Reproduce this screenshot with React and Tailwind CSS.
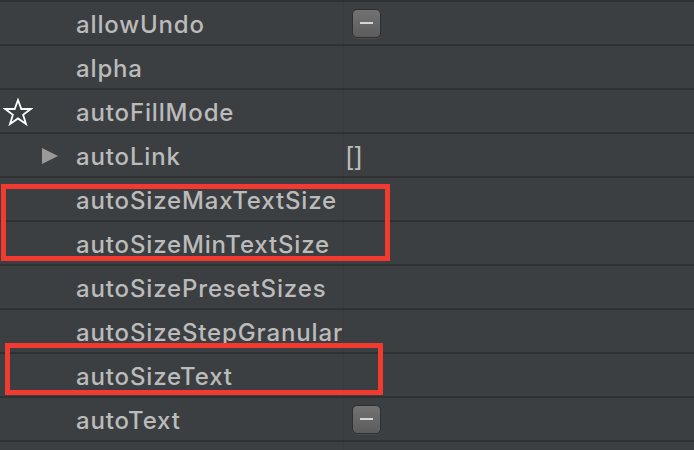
import React from "react";

const rows = [
  { name: "allowUndo", value: "minus" },
  { name: "alpha" },
  { name: "autoFillMode", icon: "star" },
  { name: "autoLink", icon: "tri", value: "brackets" },
  { name: "autoSizeMaxTextSize" },
  { name: "autoSizeMinTextSize" },
  { name: "autoSizePresetSizes" },
  { name: "autoSizeStepGranularity" },
  { name: "autoSizeText" },
  { name: "autoText", value: "minus" },
  { name: "" },
];

function Star() {
  return (
    <svg width="30" height="28" viewBox="0 0 30 28" className="ml-[3px] mt-[2px]">
      <polygon
        points="15,2 18.3,11 27.8,11 20.1,16.8 23,26 15,20.4 7,26 9.9,16.8 2.2,11 11.7,11"
        fill="none"
        stroke="#ffffff"
        strokeWidth="1.8"
        strokeLinejoin="miter"
      />
    </svg>
  );
}

function Tri() {
  return (
    <svg width="16" height="16" viewBox="0 0 16 16" className="ml-[42px] mt-[2px]">
      <polygon points="0,0 16,8 0,16" fill="#9a9a9a" />
    </svg>
  );
}

function MinusBox() {
  return (
    <div className="ml-[8px] w-[29px] h-[29px] rounded-[5px] border border-[#2e2f30] bg-gradient-to-b from-[#727272] to-[#5c5c5c] shadow-[0_1px_0_#4a4c4e] flex items-center justify-center">
      <div className="w-[13px] h-[2px] bg-[#d6d6d6]" />
    </div>
  );
}

export default function App() {
  return (
    <div
      className="relative w-[694px] h-[450px] bg-[#3c3f41] overflow-hidden border-t-2 border-[#2e3032]"
      style={{ fontFamily: "Inter, 'Noto Sans', sans-serif" }}
    >
      {rows.map((r, i) => (
        <div key={i} className="flex h-[44px] border-b-2 border-[#2e3032]">
          <div className="w-[344px] shrink-0 flex items-center overflow-hidden relative border-r border-[#393b3d]">
            <div className="w-[76px] shrink-0 flex items-center">
              {r.icon === "star" && <Star />}
              {r.icon === "tri" && <Tri />}
            </div>
            <span className="text-[24px] font-medium leading-none text-[#bbbbbb] whitespace-nowrap tracking-[0.85px] mt-[3px]">
              {r.name}
            </span>
          </div>
          <div className="flex-1 flex items-center">
            {r.value === "minus" && <MinusBox />}
            {r.value === "brackets" && (
              <span className="ml-[2px] mt-[2px] text-[26px] leading-none text-[#bbbbbb] tracking-[1.5px]" style={{ fontFamily: "'Liberation Sans', sans-serif" }}>
                []
              </span>
            )}
          </div>
        </div>
      ))}
      <div className="absolute left-[1px] top-[182px] w-[389px] h-[77px] border-[5px] border-[#f23a30]" />
      <div className="absolute left-[5px] top-[341px] w-[378px] h-[52px] border-[5px] border-[#f23a30]" />
    </div>
  );
}
